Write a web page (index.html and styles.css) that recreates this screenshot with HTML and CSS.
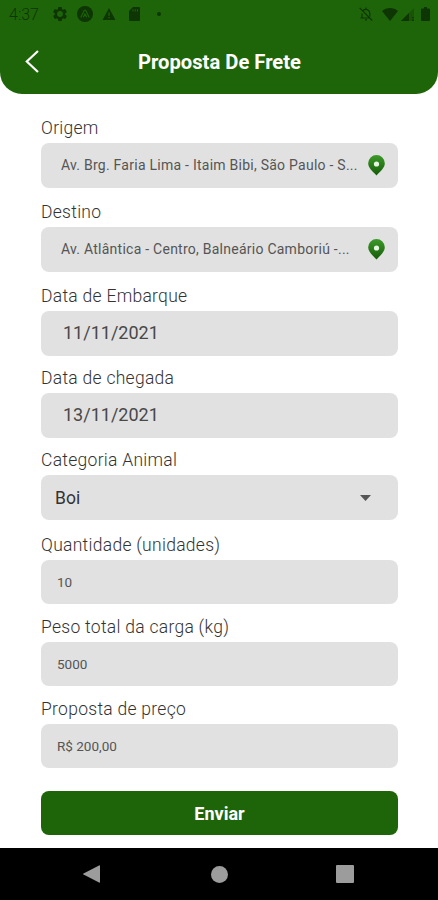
FILE: index.html
```
<!DOCTYPE html>
<html lang="pt-BR">
<head>
  <meta charset="UTF-8" />
  <meta name="viewport" content="width=device-width, initial-scale=1.0" />
  <title>Proposta De Frete</title>
  <link rel="stylesheet" href="styles.css">
</head>
<body>
  <header class="header">
    <div class="status-bar">
      <span class="clock">4:37</span>
      <div class="status-left">
        <!-- settings -->
        <svg width="14" height="14" viewBox="2 2 20 20"><path fill="currentColor" fill-rule="evenodd" d="M19.4 13a7.500 7.500 0 0 0 0-2l2.100-1.650a.5.5 0 0 0 .12-.64l-2-3.460a.5.5 0 0 0-.6-.22l-2.500 1a7.300 7.300 0 0 0-1.700-.98l-.37-2.650A.5.500 0 0 0 14 2h-4a.5.5 0 0 0-.5.420l-.37 2.650a7.300 7.300 0 0 0-1.700.98l-2.500-1a.5.5 0 0 0-.6.220l-2 3.460a.5.5 0 0 0 .12.640L4.600 11a7.500 7.500 0 0 0 0 2l-2.100 1.650a.5.5 0 0 0-.12.640l2 3.460c.12.220.38.300.6.220l2.500-1c.52.400 1.080.730 1.700.980l.37 2.650a.5.5 0 0 0 .5.420h4a.5.5 0 0 0 .5-.42l.37-2.650a7.300 7.300 0 0 0 1.700-.98l2.500 1c.22.080.48 0 .6-.22l2-3.460a.5.5 0 0 0-.12-.64zM12 16.200a4.200 4.200 0 1 1 0-8.400 4.200 4.200 0 0 1 0 8.400z"/></svg>
        <!-- expo -->
        <svg width="16" height="16" viewBox="0 0 16 16"><circle cx="8" cy="8" r="8" fill="currentColor"/><path d="M3.800 11.500L7.300 4.300h1.400l3.500 7.200M6.300 11.300L8 8l1.700 3.300" fill="none" stroke="#1e6509" stroke-width="1.100"/></svg>
        <!-- warning -->
        <svg width="14" height="12" viewBox="0 0 14 13"><path fill="currentColor" fill-rule="evenodd" d="M7 0l7 13H0zM6.300 4.800v3.700h1.400V4.800zM6.300 9.700v1.400h1.400V9.700z"/></svg>
        <!-- sd card -->
        <svg class="sd-card" width="11" height="14" viewBox="0 0 11 14"><path fill="currentColor" fill-rule="evenodd" d="M4 0h6a1 1 0 0 1 1 1v12a1 1 0 0 1-1 1H1a1 1 0 0 1-1-1V4zM3.500 2.300v2.200h1V2.300zM5.700 2.300v2.200h1V2.300zM8 2.300v2.200h1V2.300z"/></svg>
        <span class="dot"></span>
      </div>
      <div class="status-right">
        <!-- notifications off -->
        <svg class="bell" width="14" height="14" viewBox="0 0 14 14"><path d="M1.500 11h9.500M3 11V6.500M4 3.500A4 4 0 0 1 10.800 6v3.500M7 .500v1.500M.7.800l12.500 12.700M6 12.800h2" fill="none" stroke="currentColor" stroke-width="1.200"/></svg>
        <svg class="wifi" width="16" height="13" viewBox="0 0 16 13"><path fill="currentColor" d="M0 3C4.500-1 11.500-1 16 3L8 13z"/></svg>
        <svg class="signal" width="13" height="13" viewBox="0 0 13 13"><path fill="currentColor" opacity=".35" d="M13 0v13H0z"/><path fill="currentColor" d="M8 5v8H0zM11 9h1.700v1H11zM11 11.500h1.700V13H11z"/></svg>
        <svg class="battery" width="9" height="14" viewBox="0 0 9 14"><path fill="currentColor" d="M3 0h3v1.500h2a1 1 0 0 1 1 1V13a1 1 0 0 1-1 1H1a1 1 0 0 1-1-1V2.500a1 1 0 0 1 1-1h2z"/></svg>
      </div>
    </div>
    <div class="title-bar">
      <svg class="back" width="14" height="23" viewBox="0 0 14 23"><path d="M13 1L1.800 11.500 13 22" fill="none" stroke="#fff" stroke-width="2.200"/></svg>
      <h1 class="title">Proposta De Frete</h1>
    </div>
  </header>

  <main class="form">
    <div class="field spaced">
      <div class="label">Origem</div>
      <div class="box address">
        <span class="address-text">Av. Brg. Faria Lima - Itaim Bibi, São Paulo - S...</span>
        <svg class="pin" width="17" height="21" viewBox="0 0 17 21">
          <defs>
            <linearGradient id="pin-green" x1="0" y1="0" x2="0" y2="1">
              <stop offset="0" stop-color="#3d9a2a"/>
              <stop offset="1" stop-color="#155c08"/>
            </linearGradient>
          </defs>
          <path fill="url(#pin-green)" d="M8.500 0a8.300 8.300 0 0 1 8.300 8.300c0 4.200-3.300 7-8.300 12.200C3.500 15.300.2 12.500.2 8.300A8.300 8.300 0 0 1 8.500 0z"/>
          <circle cx="8.500" cy="9" r="2.600" fill="#e8f3e4"/>
        </svg>
      </div>
    </div>

    <div class="field spaced">
      <div class="label">Destino</div>
      <div class="box address">
        <span class="address-text">Av. Atlântica - Centro, Balneário Camboriú -...</span>
        <svg class="pin" width="17" height="21" viewBox="0 0 17 21">
          <path fill="url(#pin-green)" d="M8.500 0a8.300 8.300 0 0 1 8.300 8.300c0 4.200-3.300 7-8.300 12.200C3.500 15.300.2 12.500.2 8.300A8.300 8.300 0 0 1 8.500 0z"/>
          <circle cx="8.500" cy="9" r="2.600" fill="#e8f3e4"/>
        </svg>
      </div>
    </div>

    <div class="field">
      <div class="label">Data de Embarque</div>
      <div class="box date">11/11/2021</div>
    </div>

    <div class="field">
      <div class="label">Data de chegada</div>
      <div class="box date">13/11/2021</div>
    </div>

    <div class="field spaced">
      <div class="label">Categoria Animal</div>
      <div class="box select">
        <span>Boi</span>
        <svg width="11" height="6" viewBox="0 0 11 6"><path fill="#555" d="M0 0h11L5.500 6z"/></svg>
      </div>
    </div>

    <div class="field">
      <div class="label">Quantidade (unidades)</div>
      <div class="box small">10</div>
    </div>

    <div class="field">
      <div class="label">Peso total da carga (kg)</div>
      <div class="box small">5000</div>
    </div>

    <div class="field">
      <div class="label">Proposta de preço</div>
      <div class="box small">R$ 200,00</div>
    </div>

    <div class="submit">Enviar</div>
  </main>

  <!-- android navigation -->
  <nav class="nav-bar">
    <svg width="17" height="18" viewBox="0 0 17 18"><path fill="#9c9c9c" d="M16 .5a.7.7 0 0 1 1 .6v15.800a.7.7 0 0 1-1 .6L.5 9.500a.6.6 0 0 1 0-1z"/></svg>
    <span class="nav-home"></span>
    <span class="nav-recent"></span>
  </nav>
</body>
</html>
```
FILE: styles.css
```
* {
  box-sizing: border-box;
}

body {
  margin: 0;
  height: 900px;
  display: flex;
  flex-direction: column;
  background-color: #fff;
  color: #333;
  font-family: Roboto, Arial, sans-serif;
  overflow: hidden;
}

svg {
  display: block;
  flex-shrink: 0;
}

/* green header */
.header {
  height: 93.5px;
  background-color: #1e6509;
  border-radius: 0 0 22px 22px;
}

.status-bar {
  height: 28px;
  padding: 0 8px 0 9px;
  display: flex;
  align-items: center;
  color: #0e3504;
}

.clock {
  width: 44px;
  font-size: 16px;
  font-weight: 300;
}

.status-left {
  display: flex;
  align-items: center;
  gap: 9.5px;
}

.sd-card {
  margin-left: 3px;
}

.dot {
  width: 4px;
  height: 4px;
  margin-left: 7.5px;
  border-radius: 50%;
  background-color: currentColor;
}

.status-right {
  margin-left: auto;
  display: flex;
  align-items: center;
}

.bell {
  margin-right: 9px;
}

.wifi {
  margin-right: 3.5px;
}

.signal {
  margin-right: 7px;
}

.title-bar {
  height: 66px;
  padding: 0 25px;
  display: flex;
  align-items: center;
}

.title {
  flex: 1;
  margin: 1px 13px 0 0;
  color: #fff;
  font-size: 20.2px;
  font-weight: 700;
  text-align: center;
}

/* form */
.form {
  flex: 1;
  padding: 23.5px 40px 0 41px;
}

.field {
  margin-bottom: 11.5px;
}

.field.spaced {
  margin-bottom: 13.7px;
}

.label {
  height: 26px;
  line-height: 23px;
  font-size: 17.5px;
  font-weight: 300;
  letter-spacing: 0.28px;
}

.box {
  height: 44.5px;
  border-radius: 8px;
  background-color: #e1e1e1;
  display: flex;
  align-items: center;
}

.address {
  padding: 0 13px 0 20px;
  justify-content: space-between;
}

.address-text {
  color: #555;
  font-size: 14px;
  letter-spacing: 0.25px;
  line-height: 20px;
  padding-bottom: 1px;
  white-space: nowrap;
}

.date {
  padding: 0 0 2px 22px;
  color: #484848;
  font-size: 18px;
}

.select {
  padding: 0 27px 0 14px;
  justify-content: space-between;
  font-size: 17.5px;
}

.small {
  padding-left: 16px;
  color: #555;
  font-size: 13.5px;
}

.submit {
  height: 44px;
  margin-top: 22.5px;
  border-radius: 8px;
  background-color: #1e6509;
  color: #fff;
  font-size: 18px;
  font-weight: 700;
  line-height: 46px;
  text-align: center;
}

/* bottom bar */
.nav-bar {
  height: 52px;
  padding: 0 84px 0 83px;
  background-color: #000;
  display: flex;
  align-items: center;
  justify-content: space-between;
}

.nav-home {
  width: 17px;
  height: 17px;
  margin-left: 2px;
  border-radius: 50%;
  background-color: #9c9c9c;
}

.nav-recent {
  width: 18px;
  height: 18px;
  border-radius: 1px;
  background-color: #9c9c9c;
}
```
